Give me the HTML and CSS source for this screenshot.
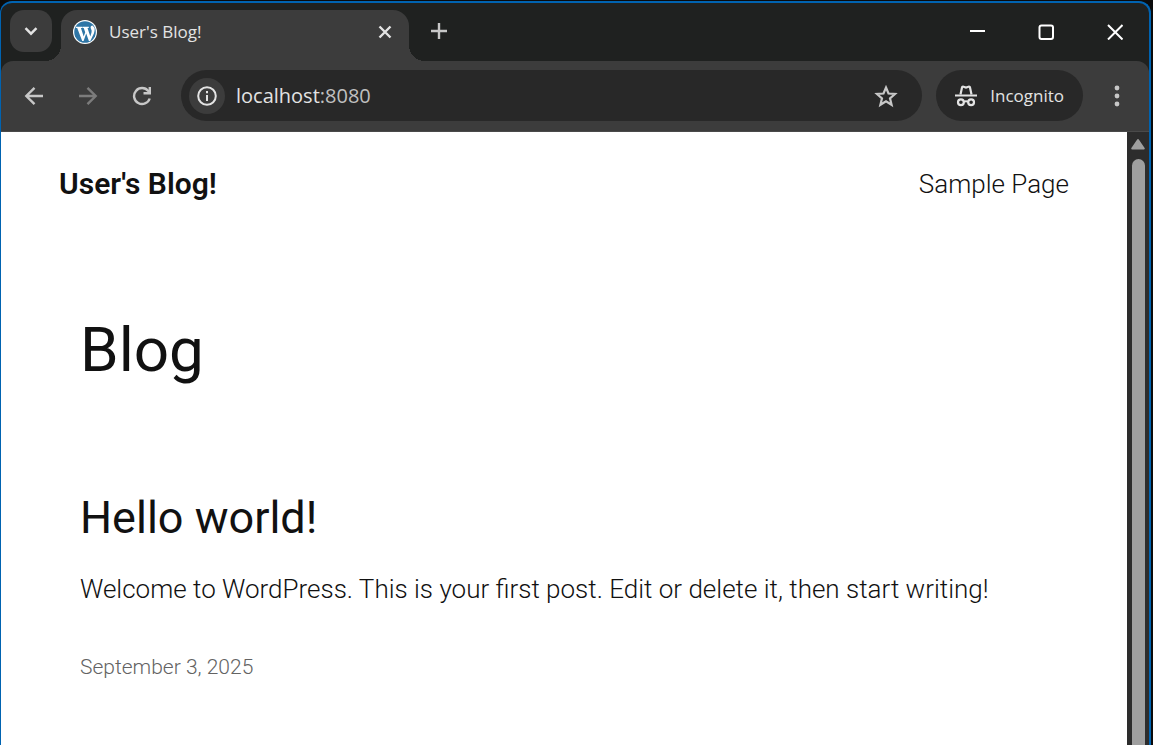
FILE: index.html
```html
<!DOCTYPE html>
<html lang="en">
<head>
<meta charset="utf-8">
<meta name="viewport" content="width=device-width, initial-scale=1">
<title>User's Blog!</title>
<link rel="stylesheet" href="styles.css">
</head>
<body>
<div class="window">
  <header class="tabstrip">
    <button class="tab-search" aria-label="Search tabs">
      <svg width="14" height="14" viewBox="0 0 14 14"><path d="M1.500 4.200l5.500 5.500 5.500-5.500" fill="none" stroke="currentColor" stroke-width="2.400"/></svg>
    </button>
    <div class="tab">
      <svg class="favicon" width="24" height="24" viewBox="0 0 24 24">
        <circle cx="12" cy="12" r="12" fill="#fff"/>
        <circle cx="12" cy="12" r="10.800" fill="#2f76a6"/>
        <path d="M2.800 6.800h6.400v1.200H7.900l2.800 8.600 1.500-4.400-1.500-4.200H9.500V6.800h6.300V8h-1.300l2.800 8.600 1.200-4c.8-2.600-.9-3.400-.9-5 0-1.300.8-2.200 1.900-2.200l2 2.400c.4 2.200 0 4-.7 5.900L17.300 21h-1.400l-2.700-7.400-2.600 7.400H9.200L4.200 8H2.800z" fill="#fff"/>
      </svg>
      <span class="tab-title">User's Blog!</span>
      <button class="tab-close" aria-label="Close tab">
        <svg width="14" height="14" viewBox="0 0 14 14"><path d="M1.500 1.500l11 11M12.500 1.500l-11 11" stroke="currentColor" stroke-width="2.400"/></svg>
      </button>
    </div>
    <button class="new-tab" aria-label="New tab">
      <svg width="16" height="16" viewBox="0 0 16 16"><path d="M8 0v16M0 8h16" stroke="currentColor" stroke-width="2.400"/></svg>
    </button>
    <div class="caption">
      <button aria-label="Minimize"><svg width="16" height="16" viewBox="0 0 16 16"><path d="M1 7h15" stroke="currentColor" stroke-width="2"/></svg></button>
      <button aria-label="Maximize"><svg width="16" height="16" viewBox="0 0 16 16"><rect x="1.500" y="1.500" width="13.500" height="13.500" rx="2" fill="none" stroke="currentColor" stroke-width="2"/></svg></button>
      <button aria-label="Close"><svg width="16" height="16" viewBox="0 0 16 16"><path d="M1 1l14.500 14.500M15.500 1L1 15.500" stroke="currentColor" stroke-width="2"/></svg></button>
    </div>
  </header>
  <nav class="toolbar" aria-label="Browser">
    <button class="nav-button" aria-label="Back"><svg width="20" height="20" viewBox="0 0 20 20"><path d="M19 10H2.500M10.500 1.800L2.300 10l8.200 8.200" fill="none" stroke="currentColor" stroke-width="2.400"/></svg></button>
    <button class="nav-button" aria-label="Forward" disabled><svg width="20" height="20" viewBox="0 0 20 20"><path d="M1 10h16.500M9.500 1.800l8.200 8.200-8.200 8.200" fill="none" stroke="currentColor" stroke-width="2.400"/></svg></button>
    <button class="nav-button" aria-label="Reload"><svg width="20" height="20" viewBox="0 0 20 20"><path d="M17.700 12.500A8 8 0 1 1 16.300 5l1.500 2" fill="none" stroke="currentColor" stroke-width="2.400"/><path d="M19 1v7.500h-7.500V6.100h5.100V1z" fill="currentColor"/></svg></button>
    <div class="omnibox">
      <button class="site-info" aria-label="View site information"><svg width="20" height="20" viewBox="0 0 20 20"><circle cx="10" cy="10" r="8.800" fill="none" stroke="currentColor" stroke-width="2"/><path d="M10 9v6M10 5v2.200" stroke="currentColor" stroke-width="2"/></svg></button>
      <span class="url">localhost<span class="port">:8080</span></span>
      <button class="bookmark" aria-label="Bookmark this tab"><svg width="24" height="24" viewBox="0 0 24 24"><path d="M12 3.500l2.500 6 6.500.5-5 4.300 1.600 6.500L12 17.300l-5.600 3.500L8 14.300 3 10l6.500-.5z" fill="none" stroke="currentColor" stroke-width="2.200"/></svg></button>
    </div>
    <button class="incognito">
      <svg width="22" height="22" viewBox="0 0 22 22"><path d="M5.500 9.500L7 2.600c.2-.8.8-1.100 1.500-.9l2.500.8 2.500-.8c.7-.2 1.300.1 1.500.9l1.500 6.900" fill="none" stroke="currentColor" stroke-width="2.200"/><path d="M0 10.500h22" stroke="currentColor" stroke-width="2.200"/><circle cx="5.900" cy="17.300" r="2.900" fill="none" stroke="currentColor" stroke-width="2.200"/><circle cx="16.100" cy="17.300" r="2.900" fill="none" stroke="currentColor" stroke-width="2.200"/><path d="M8.500 16.800q2.500-1.200 5 0" fill="none" stroke="currentColor" stroke-width="2"/></svg>
      <span>Incognito</span>
    </button>
    <button class="menu" aria-label="Menu"><svg width="6" height="22" viewBox="0 0 6 22"><g fill="currentColor"><circle cx="3" cy="3" r="2.400"/><circle cx="3" cy="11" r="2.400"/><circle cx="3" cy="19" r="2.400"/></g></svg></button>
  </nav>
  <div class="viewport">
    <div class="page">
      <header class="site-header">
        <a class="site-title" href="#">User's Blog!</a>
        <a class="site-link" href="#">Sample Page</a>
      </header>
      <main class="content">
        <h1>Blog</h1>
        <article>
          <h2><a href="#">Hello world!</a></h2>
          <p>Welcome to WordPress. This is your first post. Edit or delete it, then start writing!</p>
          <a class="date" href="#"><time datetime="2025-09-03">September 3, 2025</time></a>
        </article>
      </main>
    </div>
    <div class="scrollbar" aria-hidden="true">
      <svg width="16" height="12" viewBox="0 0 16 12"><path d="M8 2l5.800 8.500H2.200z" fill="#9f9f9f" stroke="#9f9f9f" stroke-width="2" stroke-linejoin="round"/></svg>
      <div class="thumb"></div>
    </div>
  </div>
</div>
</body>
</html>
```

FILE: styles.css
```css
* { box-sizing: border-box; }
body {
  margin: 0;
  min-height: 100vh;
  padding: 1px 2px 0 0;
  background: #0b0b0b;
  display: flex;
}
button {
  display: flex;
  align-items: center;
  justify-content: center;
  flex: none;
  margin: 0;
  padding: 0;
  border: 0;
  background: none;
  color: #c7c7c7;
  font: inherit;
}
svg { display: block; flex: none; }
a { color: inherit; text-decoration: none; }

.window {
  flex: 1;
  min-width: 0;
  display: flex;
  flex-direction: column;
  border: 2px solid #0063b1;
  border-width: 2px 2px 0 1px;
  border-radius: 12px 12px 0 0;
  overflow: hidden;
  background: #1f2120;
  font-family: "Open Sans", "Noto Sans", sans-serif;
}

.tabstrip {
  display: flex;
  height: 58px;
  padding: 7px 0 0 9px;
}
.tab-search {
  width: 42px;
  height: 42px;
  border-radius: 14px;
  background: #3c3c3c;
  color: #e3e3e3;
}
.tab {
  position: relative;
  flex: 0 1 348px;
  display: flex;
  align-items: center;
  gap: 12px;
  margin-left: 9px;
  padding: 0 16px 8px 12px;
  border-radius: 16px 16px 0 0;
  background: #3c3c3c;
}
.tab::before,
.tab::after {
  content: "";
  position: absolute;
  bottom: 0;
  width: 16px;
  height: 16px;
}
.tab::before {
  right: 100%;
  background: radial-gradient(circle at 0 0, transparent 16px, #3c3c3c 16px);
}
.tab::after {
  left: 100%;
  background: radial-gradient(circle at 100% 0, transparent 16px, #3c3c3c 16px);
}
.tab-title { flex: 1; color: #e3e3e3; font-size: 17px; }
.tab-close { width: 16px; height: 24px; color: #e3e3e3; }
.new-tab { width: 42px; height: 42px; margin-left: 9px; }
.caption { display: flex; margin-left: auto; }
.caption button { width: 69px; height: 44px; color: #fff; }

.toolbar {
  display: flex;
  align-items: center;
  height: 71px;
  padding: 0 20px 1px 6px;
  border-bottom: 1px solid #4a4a4a;
  border-radius: 12px 12px 0 0;
  background: #3c3c3c;
}
.nav-button { width: 54px; height: 48px; }
.nav-button:disabled { color: #7c7c7c; }
.omnibox {
  flex: 1;
  display: flex;
  align-items: center;
  height: 51px;
  margin-left: 12px;
  padding: 0 24px 0 8px;
  border-radius: 26px;
  background: #282828;
}
.site-info {
  width: 36px;
  height: 36px;
  border-radius: 50%;
  background: #3c3c3c;
  color: #e3e3e3;
}
.url { flex: 1; margin-left: 11px; color: #e3e3e3; font-size: 20px; }
.port { color: #c0c0c0; }
.incognito {
  gap: 13px;
  height: 51px;
  margin-left: 14px;
  padding: 0 19px;
  border-radius: 26px;
  background: #282828;
  color: #e3e3e3;
  font-size: 17px;
}
.menu { width: 24px; height: 48px; margin-left: 22px; }

.viewport { flex: 1; display: flex; }
.page {
  flex: 1;
  min-width: 0;
  background: #fff;
  color: #111;
  font-family: Roboto, "Liberation Sans", sans-serif;
  font-weight: 300;
}
.site-header {
  display: flex;
  align-items: center;
  justify-content: space-between;
  padding: 34px 58px 32px;
}
.site-title { font-size: 30px; line-height: 36px; font-weight: 600; }
.site-link { font-size: 26px; line-height: 36px; }
.content { padding: 80px 79px 30px; }
h1 { margin: 0; font-size: 62px; line-height: 72px; font-weight: 400; }
h2 { margin: 105px 0 0; font-size: 45px; line-height: 54px; font-weight: 400; }
p { margin: 24px 0 0; font-size: 26px; line-height: 40px; }
.date { display: block; margin-top: 42px; font-size: 21px; line-height: 32px; color: #636363; }

.scrollbar {
  width: 22px;
  display: flex;
  flex-direction: column;
  align-items: center;
  gap: 9px;
  padding-top: 6px;
  background: #2c2c2c;
}
.thumb { flex: 1; width: 13px; border-radius: 7px 7px 0 0; background: #9f9f9f; }
```
